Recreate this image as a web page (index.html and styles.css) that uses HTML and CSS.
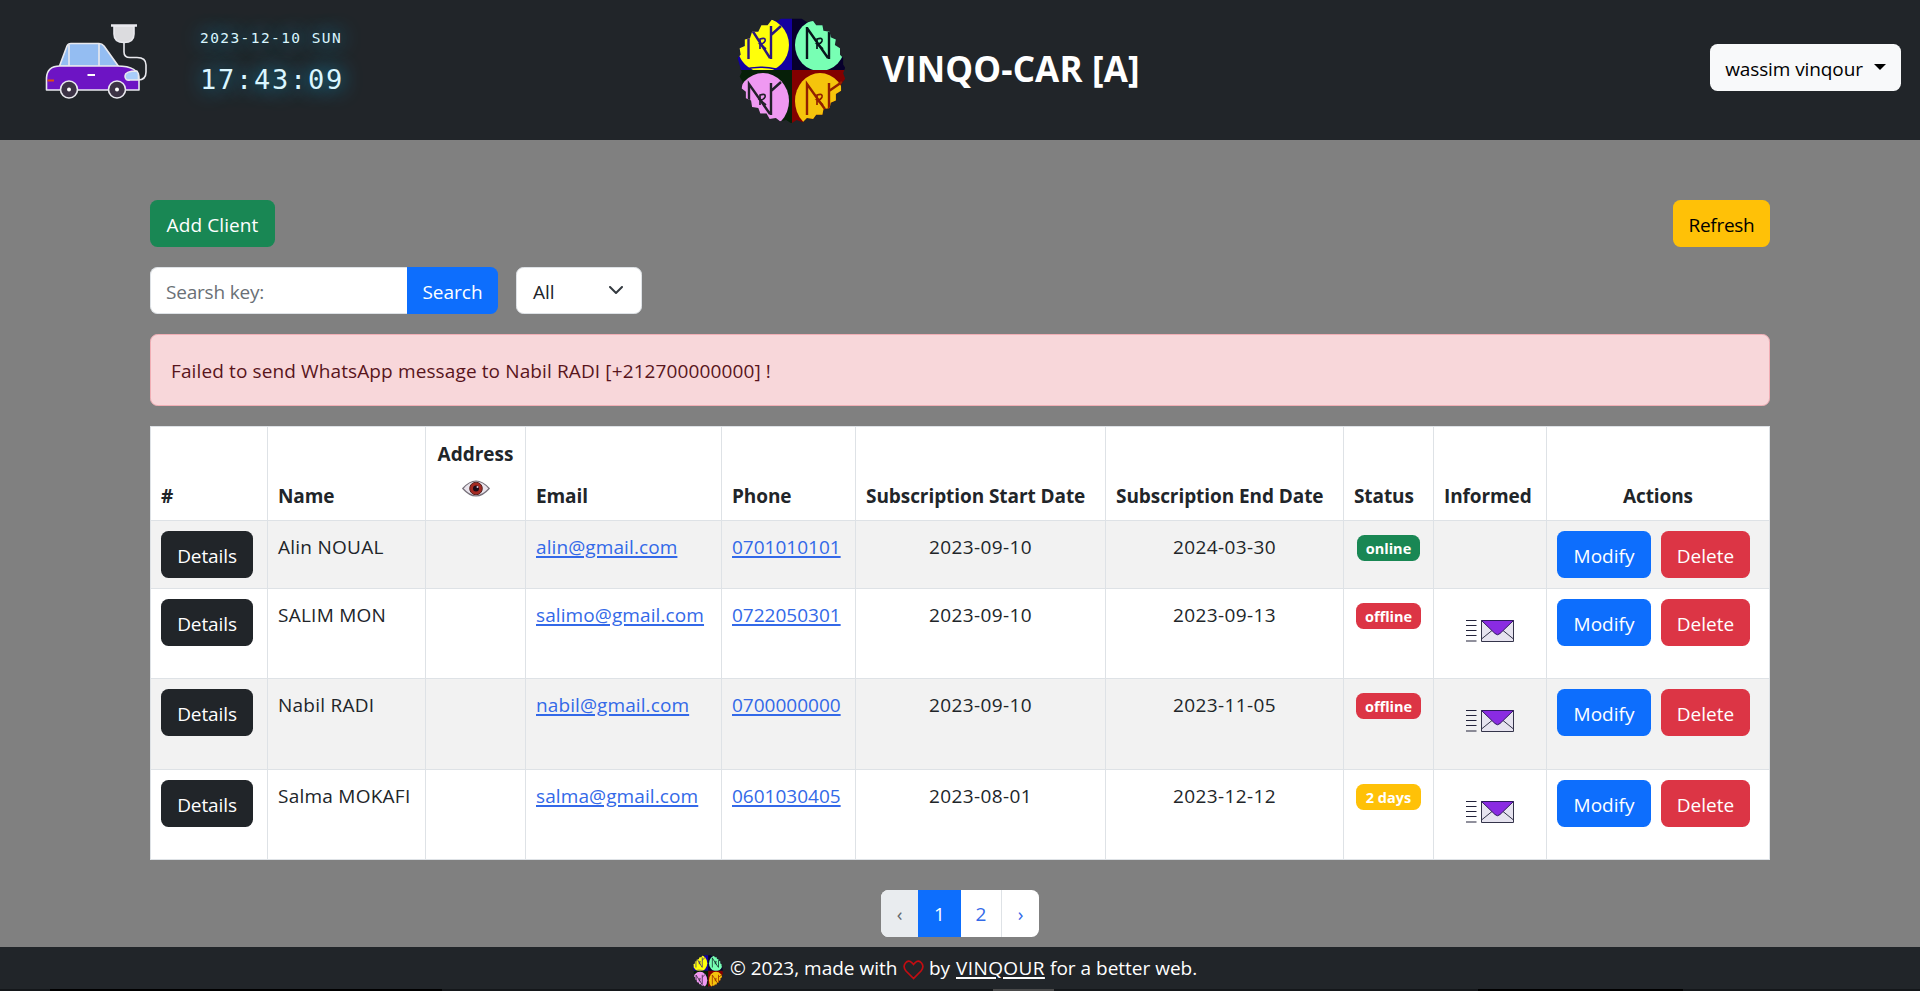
FILE: index.html
```
<!DOCTYPE html>
<html lang="en">
<head>
<meta charset="utf-8">
<title>VINQO-CAR</title>
<link rel="stylesheet" href="styles.css">
</head>
<body>
<svg width="0" height="0" class="defs" aria-hidden="true">
  <symbol id="logo" viewBox="0 0 107 105">
    <clipPath id="q1"><path d="M0 0H54V52H0z"/></clipPath>
    <clipPath id="q2"><path d="M54 0H107V52H54z"/></clipPath>
    <clipPath id="q3"><path d="M0 52H54V105H0z"/></clipPath>
    <clipPath id="q4"><path d="M54 52H107V105H54z"/></clipPath>
    <clipPath id="disc"><path transform="translate(-2.500 -5.800) scale(1.035 1.090)" d="M2 42l3-3-1-6 5-2 0-6 5-1 2-6 6 0 3-6 6 0 4-5 5 1 4-2H64l5 3 6-1 3 4 6 0 1 5 6 1 1 5 5 2-1 5 5 3 0 6 3 3 0 6 2 3-2 5 2 5-4 5 0 6-5 3 0 6-5 2-1 5-6 1-1 5-6 0-3 4-6-1-4 4-6-2-5 3-5-3-6 1-4-3-6 1-3-5-6 0-2-5-6-1-1-6-5-2 0-6-4-3 1-6-3-5 2-4z"/></clipPath>
    <g clip-path="url(#disc)">
      <g clip-path="url(#q1)"><path fill="#1400a0" d="M0 0H54V52H0z"/><ellipse cx="25" cy="27" rx="26" ry="27" fill="#ffff0a"/><path d="M4 52Q20 47 38 51Q48 52 54 42M44 48L54 44" fill="none" stroke="#1400a0" stroke-width="1.500"/><path class="mono" stroke="#2b1680" d="M10.500 41V15M14 12L32 40M33 41V8M33 17L43 8"/><path class="mono thin" stroke="#2b1680" d="M22 31V21q6-2 5 2q-1 3-5 3l6 5"/></g>
      <g clip-path="url(#q2)"><path fill="#07002c" d="M54 0H107V52H54z"/><ellipse cx="82" cy="27" rx="25" ry="26" fill="#78ffb4"/><path class="mono" stroke="#07151c" d="M69 41V9M69 10L90 40M91 41V14"/><path class="mono thin" stroke="#07151c" d="M79 31V21q6-2 5 2q-1 3-5 3l6 5"/></g>
      <g clip-path="url(#q3)"><path fill="#061f08" d="M0 52H54V105H0z"/><ellipse cx="25" cy="83" rx="26" ry="28" fill="#ef99f2"/><path class="mono" stroke="#22202a" d="M11 90V66L32 96M33 97V65M33 73L43 64"/><path class="mono thin" stroke="#22202a" d="M22 87V77q6-2 5 2q-1 3-5 3l6 5"/></g>
      <g clip-path="url(#q4)"><path fill="#820000" d="M54 52H107V105H54z"/><ellipse cx="82" cy="83" rx="25" ry="28" fill="#f5c40c"/><path class="mono" stroke="#922000" d="M69 97V66L89 94M91 91V65M91 73L104 64"/><path class="mono thin" stroke="#922000" d="M79 87V77q6-2 5 2q-1 3-5 3l6 5"/></g>
    </g>
  </symbol>
  <symbol id="mail" viewBox="0 0 50 24">
    <path d="M1 1.500H11.500M1 6.500H11.500M1 11.500H11.500M1 16.500H11.500M1 22H11.500" stroke="#23233b" stroke-width="1.200" fill="none"/>
    <path d="M16.500 1.500H48.500V22.500H16.500z" fill="#e6e3ef" stroke="#34344a"/>
    <path d="M16.500 20L27 11.500M48.500 20L38 11.500" stroke="#34344a" fill="none"/>
    <path d="M16.500 1.500H48.500L35 14.500Q32.500 17 30 14.500z" fill="#8a2be2" stroke="#301a60"/>
  </symbol>
</svg>

<header class="top">
  <svg class="car" width="104" height="76" viewBox="0 0 104 76">
    <g stroke="#e9e9ee" stroke-width="1.600" stroke-linejoin="round">
      <path d="M14.500 42L22 22Q23 19.500 26 19.500H54Q57 19.500 59 22L74 43z" fill="#94bdf2"/>
      <path d="M24 21V42M54 20V42" fill="none"/>
      <path d="M79 18V28Q79 33.500 85 33.500H92Q101 33.500 101 41V48Q101 56 93 56" fill="none"/>
      <path d="M69 2V10Q69 18.500 79 18.500T89 10V2z" fill="#dcdcdf"/>
      <path d="M66 1.500H92" stroke-width="2.500"/>
      <path d="M1.500 66V54Q2 42 15 42H72Q94 42 94 55V66z" fill="#6d14c4"/>
      <path d="M92 47Q80 47 80 52T85 56H93.500V50z" fill="#a9cdfa"/>
      <circle cx="24" cy="65.500" r="8.500" fill="#3c3345"/><circle cx="72" cy="65.500" r="8.500" fill="#3c3345"/>
    </g>
    <path d="M42.500 51H50" stroke="#fff" stroke-width="2"/><path d="M2.500 56.500H9" stroke="#e24c12" stroke-width="2"/>
    <circle cx="24" cy="65.500" r="2" fill="#fff"/><circle cx="72" cy="65.500" r="2" fill="#fff"/>
  </svg>
  <div class="clock"><p class="date">2023-12-10 SUN</p><p class="time">17:43:09</p></div>
  <svg class="brand-logo" width="107" height="105"><use href="#logo"/></svg>
  <h1>VINQO-CAR [A]</h1>
  <button class="btn light"><span class="user">wassim vinqour</span><i class="caret"></i></button>
</header>

<main>
  <div class="bar"><button class="btn green">Add Client</button><button class="btn yellow">Refresh</button></div>
  <div class="filters">
    <div class="field">Searsh key:</div><button class="btn blue search">Search</button>
    <div class="select"><span>All</span><svg width="14" height="9" viewBox="0 0 14 9"><path d="M1 1l6 6 6-6" fill="none" stroke="#343a40" stroke-width="2" stroke-linecap="round" stroke-linejoin="round"/></svg></div>
  </div>
  <div class="alert">Failed to send WhatsApp message to Nabil RADI [+212700000000] !</div>

  <table>
    <colgroup><col class="c1"><col class="c2"><col class="c3"><col class="c4"><col class="c5"><col class="c6"><col class="c7"><col class="c8"><col class="c9"><col class="c10"></colgroup>
    <thead><tr>
      <th>#</th><th>Name</th>
      <th class="address">Address<svg width="28" height="17" viewBox="0 0 28 17"><path d="M.8 8.500Q14-6.500 27.200 8.500Q14 23.500.8 8.500z" fill="#e9e4ec" stroke="#77717b" stroke-width="1.200"/><circle cx="14" cy="8.500" r="6.300" fill="#a42a22" stroke="#54201f"/><circle cx="14" cy="8.500" r="3" fill="#1c0b18"/><circle cx="15.500" cy="7" r="1" fill="#dcd"/></svg></th>
      <th>Email</th><th>Phone</th><th class="long">Subscription Start Date</th><th class="long">Subscription End Date</th><th>Status</th><th>Informed</th><th class="mid">Actions</th>
    </tr></thead>
    <tbody>
      <tr class="odd short"><td><button class="btn dark">Details</button></td><td class="name">Alin NOUAL</td><td></td><td class="email"><a>alin@gmail.com</a></td><td><a>0701010101</a></td><td class="mid day">2023-09-10</td><td class="mid day">2024-03-30</td><td class="mid st"><span class="badge green on">online</span></td><td></td><td><div class="acts"><button class="btn blue mod">Modify</button><button class="btn red del">Delete</button></div></td></tr>
      <tr><td><button class="btn dark">Details</button></td><td class="name">SALIM MON</td><td></td><td class="email"><a>salimo@gmail.com</a></td><td><a>0722050301</a></td><td class="mid day">2023-09-10</td><td class="mid day">2023-09-13</td><td class="mid st"><span class="badge red">offline</span></td><td class="mid"><svg class="mail" width="50" height="24"><use href="#mail"/></svg></td><td><div class="acts"><button class="btn blue mod">Modify</button><button class="btn red del">Delete</button></div></td></tr>
      <tr class="odd tall"><td><button class="btn dark">Details</button></td><td class="name">Nabil RADI</td><td></td><td class="email"><a>nabil@gmail.com</a></td><td><a>0700000000</a></td><td class="mid day">2023-09-10</td><td class="mid day">2023-11-05</td><td class="mid st"><span class="badge red">offline</span></td><td class="mid"><svg class="mail" width="50" height="24"><use href="#mail"/></svg></td><td><div class="acts"><button class="btn blue mod">Modify</button><button class="btn red del">Delete</button></div></td></tr>
      <tr><td><button class="btn dark">Details</button></td><td class="name">Salma MOKAFI</td><td></td><td class="email"><a>salma@gmail.com</a></td><td><a>0601030405</a></td><td class="mid day">2023-08-01</td><td class="mid day">2023-12-12</td><td class="mid st"><span class="badge yellow">2 days</span></td><td class="mid"><svg class="mail" width="50" height="24"><use href="#mail"/></svg></td><td><div class="acts"><button class="btn blue mod">Modify</button><button class="btn red del">Delete</button></div></td></tr>
    </tbody>
  </table>

  <nav class="pages"><span class="prev">‹</span><span class="active">1</span><span class="two">2</span><span class="next">›</span></nav>
</main>

<footer>
  <svg class="foot-logo" width="30" height="32" viewBox="0 0 107 105" preserveAspectRatio="none"><use href="#logo" width="107" height="105"/></svg>
  <span class="f1">© 2023, made with</span>
  <svg class="heart" width="21" height="20" viewBox="0 0 21 20"><path d="M10.500 18.500L3 11Q-.5 6.500 2.500 3T9 2.800L10.500 4.500L12 2.800Q15.500-.5 18.500 3T18 11z" fill="none" stroke="#c20d12" stroke-width="1.700"/></svg>
  <span class="f2">by</span><u class="f3">VINQOUR</u><span class="f4">for a better web.</span>
</footer>
<div class="edge"></div>
</body>
</html>
```
FILE: styles.css
```
* { box-sizing: border-box; }
body { margin: 0; width: 1920px; height: 991px; overflow: hidden; display: flex; flex-direction: column; background: #808080; color: #212529; font: 19px/30px "Open Sans", "Noto Sans", sans-serif; }
.defs { position: absolute; }
p, h1 { margin: 0; }
.mono { fill: none; stroke-width: 2.4; }
.thin { stroke-width: 1.7; }

.top { height: 140px; flex: none; background: #212529; display: flex; align-items: flex-start; padding-right: 19px; }
.car { margin: 24px 0 0 45px; }
.clock { width: 160px; margin: 28px 0 0 51px; font-family: "DejaVu Sans Mono", "Liberation Mono", monospace; color: #daf6ff; text-shadow: 0 0 20px #0aafe6; white-space: nowrap; }
.date { font-size: 14.5px; line-height: 20px; letter-spacing: 1.42px; }
.time { font-size: 27px; line-height: 40px; letter-spacing: 1.75px; margin-top: 12px; }
.brand-logo { margin: 18px 0 0 378px; }
h1 { color: #fff; font-size: 35px; line-height: 42px; font-weight: 700; margin: 48px 0 0 37px; white-space: nowrap; letter-spacing: .15px; }
.top .btn { margin: 44px 0 0 auto; }

.btn { height: 47px; border: 0; border-radius: 7.5px; font: inherit; color: #fff; display: flex; align-items: center; justify-content: center; padding: 2px 0 0; white-space: nowrap; }
.light { width: 191px; background: #f8f9fa; color: #000; gap: 11px; }
.user { letter-spacing: -.1px; }
.caret { border: 6px solid transparent; border-top-color: #000; border-bottom: 0; margin-top: -4px; }
.green { background: #198754; }
.yellow { background: #ffc107; }
.blue { background: #0d6efd; }
.red { background: #dc3545; }
.dark { background: #212529; width: 92px; letter-spacing: -.1px; }

main { width: 1620px; margin: 60px auto 0; flex: 1; }
.bar { display: flex; justify-content: space-between; }
.bar .green { width: 125px; letter-spacing: .1px; }
.bar .yellow { width: 97px; color: #000; letter-spacing: -.3px; }
.filters { display: flex; margin-top: 20px; height: 47px; }
.field, .select { background: #fff; border: 1px solid #dee2e6; display: flex; align-items: center; padding-top: 2px; }
.field { width: 257px; border-right: 0; border-radius: 7.5px 0 0 7.5px; padding-left: 15px; color: #6a7076; letter-spacing: -.2px; }
.search { width: 91px; border-radius: 0 7.5px 7.5px 0; }
.select { width: 126px; margin-left: 18px; border-radius: 7.5px; justify-content: space-between; padding-left: 16px; padding-right: 18px; }
.select svg { margin-top: -2px; }
.alert { margin-top: 20px; height: 72px; border: 1px solid #f1aeb5; border-radius: 7.5px; background: #f8d7da; color: #58151c; padding: 21px 20px; white-space: nowrap; letter-spacing: .12px; }

table { margin-top: 20px; width: 1620px; table-layout: fixed; border-collapse: separate; border-spacing: 0; background: #fff; border: solid #dee2e6; border-width: 1px 0 0 1px; }
.c1 { width: 117px; } .c2 { width: 158px; } .c3 { width: 100px; } .c4 { width: 196px; } .c5 { width: 134px; }
.c6 { width: 250px; } .c7 { width: 238px; } .c8 { width: 90px; } .c9 { width: 113px; } .c10 { width: 223px; }
th, td { border: solid #dee2e6; border-width: 0 1px 1px 0; padding: 10px 10px 0; vertical-align: top; text-align: left; white-space: nowrap; line-height: 32px; }
th { height: 94px; vertical-align: bottom; padding: 0 10px 9px; line-height: 30px; letter-spacing: -.1px; }
.long { letter-spacing: -.07px; }
td { height: 90px; }
.short td { height: 68px; }
.tall td { height: 91px; }
.odd td { background: #f2f2f2; }
.name { letter-spacing: .25px; }
.email { letter-spacing: .1px; }
.day { letter-spacing: .4px; }
.mid { text-align: center; }
.st { padding-left: 0; padding-right: 0; }
.address { text-align: center; padding: 0 0 23px; line-height: 24px; letter-spacing: 0; }
.address svg { display: block; margin: 14px auto 0; }
a { color: #3369e8; text-decoration: underline; text-decoration-thickness: 2px; text-underline-offset: 2px; }
.acts { display: flex; gap: 10px; }
.mod { width: 94px; }
.del { width: 89px; }
.badge { display: inline-block; width: 65px; height: 26px; margin-top: 4px; border-radius: 7.5px; color: #fff; font-size: 14.5px; line-height: 27px; font-weight: 700; vertical-align: top; }
.on { width: 63px; }
.mail { display: block; margin: 20px auto 0; }

.pages { display: flex; width: 158px; height: 47px; margin: 30px auto 0; border-radius: 7.5px; overflow: hidden; background: #fff; color: #3369e8; line-height: 49px; text-align: center; }
.prev { width: 37px; background: #e9ecef; color: #62686e; }
.active { width: 43px; background: #0d6efd; color: #fff; }
.two { width: 41px; border-right: 1px solid #dee2e6; }
.next { width: 37px; }

footer { flex: none; height: 42px; background: #212529; color: #fff; display: flex; padding: 6px 0 0 693px; white-space: nowrap; }
footer svg { flex: none; }
.foot-logo { margin-top: 2px; }
footer span, footer u { line-height: 31px; }
.f1 { width: 167px; margin-left: 7px; }
.heart { margin: 7px 0 0 6px; }
.f2 { width: 21px; margin-left: 5px; }
.f3 { margin-left: 6px; width: 89px; letter-spacing: .4px; text-decoration-thickness: 2px; text-underline-offset: 2px; }
.f4 { margin-left: 5px; }

/* dark strip along the bottom edge of the window */
.edge { flex: none; height: 2px; background: linear-gradient(90deg, #14171a 50px, #000 50px 442px, #14171a 442px 993px, #4a4a4a 993px 1054px, #14171a 1054px 1478px, #000 1478px 1683px, #14171a 1683px); }
```
